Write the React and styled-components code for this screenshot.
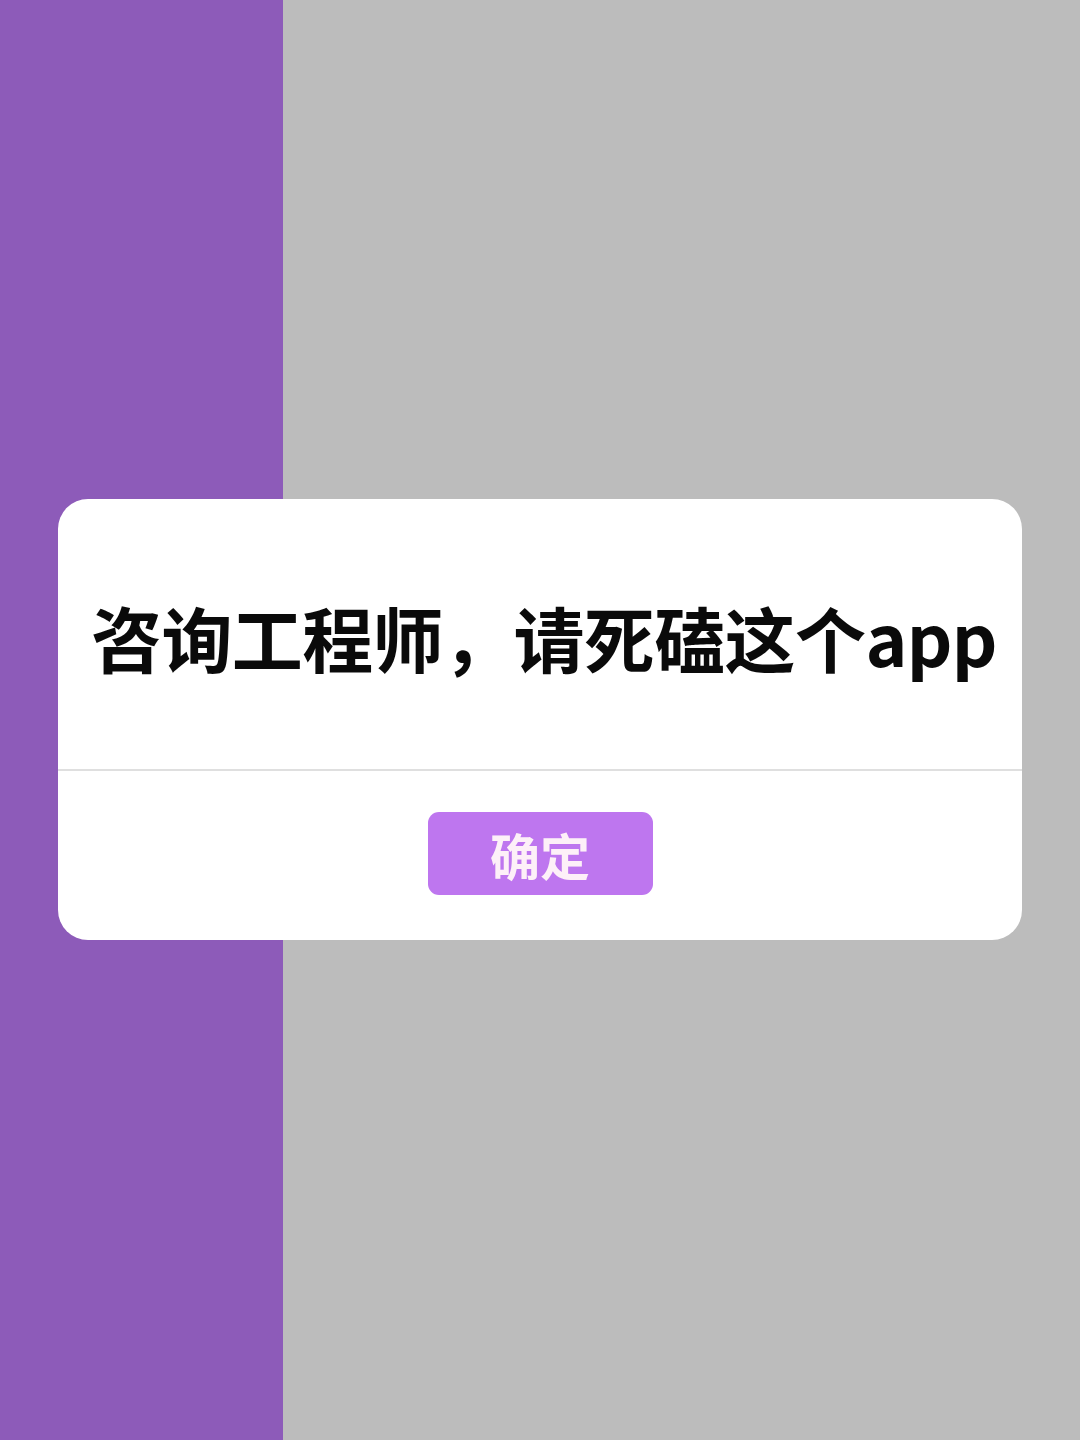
import React from "react";
import styled, { createGlobalStyle } from "styled-components";

const Global = createGlobalStyle`
  html, body { margin: 0; padding: 0; }
  body { font-family: "Noto Sans CJK SC", "Noto Sans", sans-serif; }
`;

const Screen = styled.div`
  position: relative;
  width: 1080px;
  height: 1440px;
  display: flex;
  overflow: hidden;
`;

const SidePanel = styled.div`
  width: 283px;
  flex: none;
  background: #8d5bb9;
`;

const MainPanel = styled.div`
  flex: 1;
  background: #bcbcbc;
`;

const Overlay = styled.div`
  position: absolute;
  inset: 0;
  display: flex;
  justify-content: center;
  padding-top: 499px;
  box-sizing: border-box;
`;

const Dialog = styled.div`
  width: 964px;
  height: 441px;
  background: #ffffff;
  border-radius: 30px;
  display: flex;
  flex-direction: column;
  overflow: hidden;
`;

const Body = styled.div`
  height: 270px;
  display: flex;
  align-items: center;
  justify-content: center;
  padding: 4px 0 0 8px;
  box-sizing: border-box;
`;

const Title = styled.h1`
  margin: 0;
  font-family: "Noto Sans CJK SC", "Noto Sans", sans-serif;
  font-weight: 700;
  font-size: 71px;
  line-height: 1;
  color: #0a0a0a;
  white-space: nowrap;
  letter-spacing: -0.6px;
`;

const Divider = styled.hr`
  margin: 0;
  border: none;
  height: 2px;
  background: #dfdfdf;
`;

const Footer = styled.div`
  flex: 1;
  display: flex;
  align-items: center;
  justify-content: center;
  padding-bottom: 4px;
`;

const ConfirmButton = styled.button`
  width: 225px;
  height: 83px;
  border: none;
  border-radius: 11px;
  background: #be76ef;
  color: #fdf0f8;
  font-family: "Noto Sans CJK SC", serif;
  font-weight: 700;
  font-size: 50px;
  line-height: 1;
  padding: 0;
  cursor: pointer;
`;

export default function App() {
  return (
    <>
      <Global />
      <Screen>
        <SidePanel />
        <MainPanel />
        <Overlay>
          <Dialog>
            <Body>
              <Title>咨询工程师，请死磕这个app</Title>
            </Body>
            <Divider />
            <Footer>
              <ConfirmButton>确定</ConfirmButton>
            </Footer>
          </Dialog>
        </Overlay>
      </Screen>
    </>
  );
}
